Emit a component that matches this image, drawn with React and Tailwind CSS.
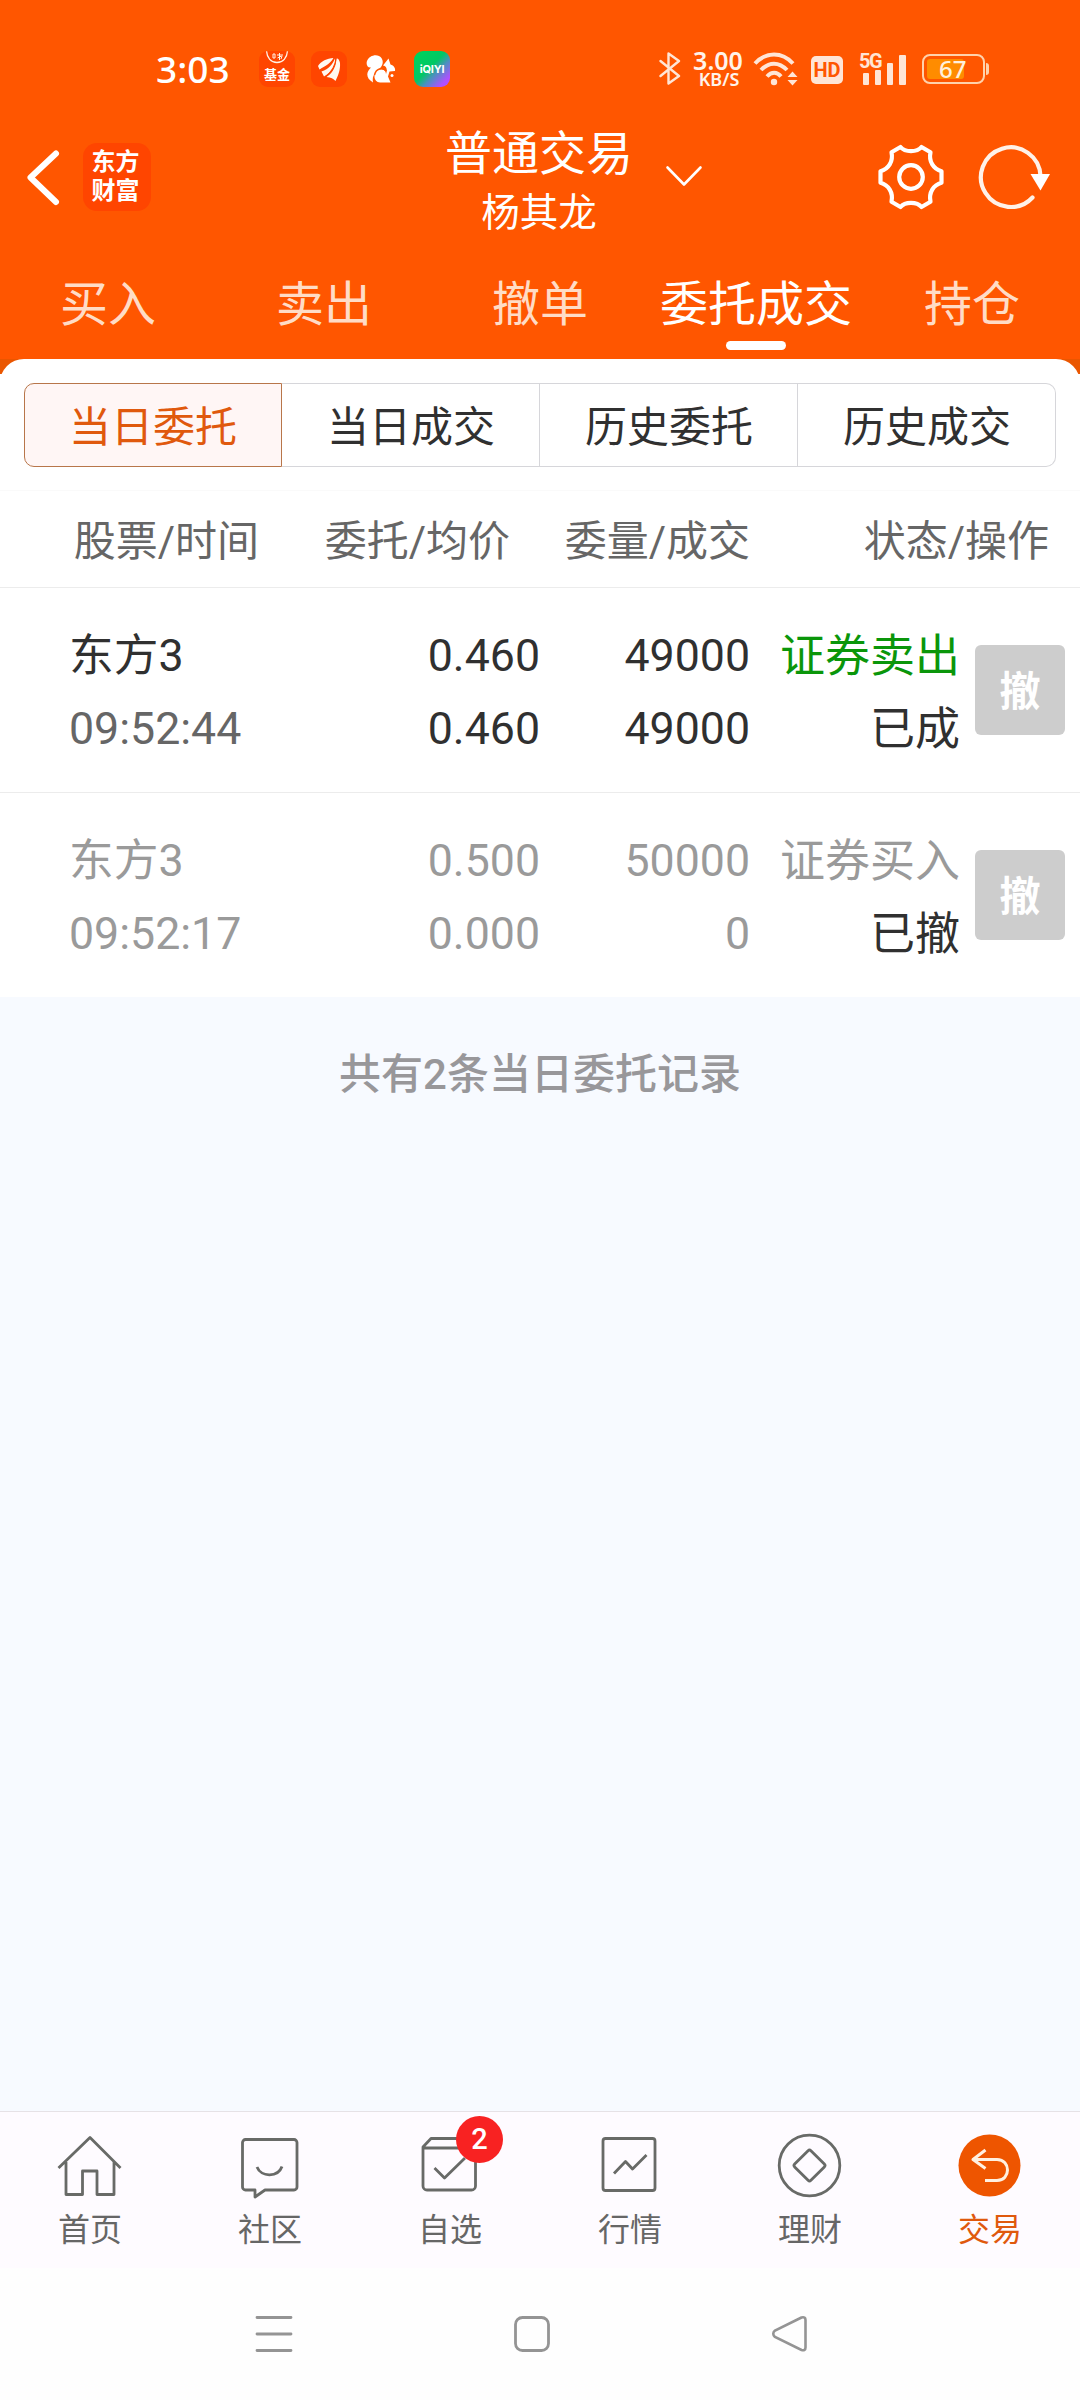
import React from "react";

const FONT = "font-[Roboto,'Noto_Sans_CJK_SC',sans-serif]";

function StatusBar() {
  return (
    <div className="flex h-[110px] items-start text-white">
      <span className="ml-[156px] mt-[45px] w-[103px] font-['Noto_Sans','Noto_Sans_CJK_SC',sans-serif] text-[37px] font-medium leading-[48px]">3:03</span>
      <div className="mt-[51px] flex h-9 w-9 flex-col items-center overflow-hidden rounded-[9px] bg-[#ff4500]">
        <svg width="24" height="13" viewBox="0 0 24 13" fill="none" stroke="#fff3e6" strokeWidth="1.3">
          <path d="M1.5 0C2 7 6 11.5 12 11.5S22 7 22.500 0" />
          <path d="M8 3v4h2V3zM12 4h6M14.500 2v7M12.500 7l4-2M17 5l-1 3" strokeWidth="1" />
        </svg>
        <span className="text-[13px] font-bold leading-[21px]">基金</span>
      </div>
      <div className="ml-4 mt-[51px] flex h-9 w-9 items-center justify-center rounded-[9px] bg-[#ff4500]">
        <svg width="36" height="36" viewBox="0 0 36 36" fill="#fff8f0">
          <path d="M7 15C10 10 16 7.500 22.500 7 20 12 15 14.500 8.500 18.500Z" />
          <path d="M10.500 20.500C18 18 22 13 24 7 25.500 13 21 21 13 25.500Z" />
          <path d="M15.500 26C23 21 25 14 25.500 7.500 27 7 28.500 9 29 12 29.500 19 27 25 24.500 30 22.500 27.500 20 26.500 15.500 26Z" />
          <path d="M9 19.500C17 16.500 21 12 23.500 7M14 26C21 21 24.500 14 25 7" fill="none" stroke="#ff4500" strokeWidth="1.100" />
        </svg>
      </div>
      <svg className="ml-[19px] mt-[54px]" width="30" height="30" viewBox="0 0 30 30">
        <path d="M7 28.500C-.5 24 0 18 5 13.500 1 14 0 10 1 7 3 2 9 0 13 2 17 4 18 9 15 13 11 18 5.500 20 7 28.500Z" fill="#fff" />
        <path d="M17 11.500 22.500 4.500 24.500 10.500C28 11.500 29.500 14.500 29 17L23.500 17.500 22 22.500 24.500 28.500H14C7 28 7 19 12 16 16 14 20 16 20 20 22 15 20 12 17 11.500Z" fill="#fff" />
        <circle cx="26" cy="21.500" r="1.500" fill="#fff" />
        <path d="M8.500 21C10 14.500 16 13 20.500 17" fill="none" stroke="#ff5600" strokeWidth="1.500" />
      </svg>
      <div className="ml-[18px] mt-[51px] flex h-9 w-9 items-center justify-center rounded-[9px] bg-[linear-gradient(135deg,#00d35b_0%,#00c864_45%,#4d8fc0_62%,#b050ff_85%)] font-[Inter,sans-serif] text-[11px] font-bold leading-none tracking-[-0.2px]">
        iQIYI
      </div>

      <svg className="ml-[209px] mt-[51px]" width="22" height="35" viewBox="0 0 22 35" fill="none" stroke="#ffe5d6" strokeWidth="2.400" strokeLinejoin="round" strokeLinecap="round">
        <path d="M1.500 10 20 25 9.500 32.500V2.500L20 10 1.500 25" />
      </svg>
      <div className="ml-[10px] mt-[49px] flex w-[54px] flex-col items-center font-['Noto_Sans',sans-serif] text-[#fff3ea]">
        <span className="text-[25px] font-semibold leading-[22px]">3.00</span>
        <span className="ml-0.5 text-[18px] font-semibold leading-[17px]">KB/S</span>
      </div>
      <svg className="ml-[8px] mt-[51px]" width="46" height="36" viewBox="0 0 46 36" fill="none" stroke="#ffe5d6" strokeWidth="4">
        <path d="M2 12.500C13 .5 29 .5 40 12.500" />
        <path d="M8 19C16 10.500 26 10.500 34 19" />
        <path d="M14 25.500C18.500 20.500 24 20.500 28 25.500" />
        <circle cx="21" cy="31" r="3.200" fill="#ffe5d6" stroke="none" />
        <path d="M34.500 26 39.500 20.500 44.500 26ZM34.500 29H44.500L39.500 34.500Z" fill="#ffe5d6" stroke="none" />
      </svg>
      <div className="ml-[12px] mt-[56px] flex h-7 w-8 items-center justify-center rounded-[5px] bg-[#ffe5d6] font-[Roboto,sans-serif] text-[20px] font-bold leading-none text-[#ff5600]">
        HD
      </div>
      <div className="ml-[16px] mt-[51px] flex h-[34px] w-[48px] items-end text-[#ffe5d6]">
        <div className="flex w-[27px] flex-col">
          <span className="h-[18px] font-[Roboto,sans-serif] text-[20px] font-bold leading-[18px] tracking-[-1.500px]">5G</span>
          <div className="ml-[4px] flex items-end gap-[6px]">
            <i className="h-3 w-1.5 rounded-[1px] bg-[#ffe5d6]" />
            <i className="h-[15px] w-1.5 rounded-[1px] bg-[#ffe5d6]" />
          </div>
        </div>
        <i className="ml-[1px] h-[22px] w-1.5 rounded-[1px] bg-[#ffe5d6]" />
        <i className="ml-[6px] h-[30px] w-[7px] rounded-[1px] bg-[#ffe5d6]" />
      </div>
      <div className="ml-[15px] mt-[54px] flex h-[30px] w-[63px] rounded-[8px] border-2 border-[#ffd2ab] p-[3px]">
        <div className="flex h-full w-[37px] items-center whitespace-nowrap rounded-[3px] bg-[#ff8c00] pl-[12px] font-['Noto_Sans',sans-serif] text-[24px] font-medium leading-none text-[#fff0dc]">67</div>
      </div>
      <i className="ml-[1px] mt-[63px] h-3 w-[3px] rounded-r-sm bg-[#ffd2ab]" />
    </div>
  );
}

function TitleBar() {
  return (
    <div className="grid h-[137px] grid-cols-[446px_188px_1fr] items-start text-white">
      <div className="flex pt-[33px]">
        <svg className="ml-[25px] mt-[5px]" width="36" height="60" viewBox="25 148 36 60" fill="none" stroke="#fff" strokeWidth="6" strokeLinecap="round" strokeLinejoin="round">
          <path d="M56 153.500 30.500 177.500 56 202" />
        </svg>
        <div className="ml-[22px] flex h-[68px] w-[68px] flex-col items-center justify-center rounded-[14px] bg-[#ff4500] pr-[3px] text-[24px] font-bold leading-[29px]">
          <span>东方</span>
          <span>财富</span>
        </div>
      </div>
      <div className="flex flex-col items-center whitespace-nowrap pr-[2px] pt-[16px]">
        <span className="text-[47px] leading-[56px]">普通交易</span>
        <span className="mt-[6px] text-[38.500px] leading-[50px]">杨其龙</span>
      </div>
      <div className="flex">
        <svg className="ml-[30px] mt-[54px]" width="40" height="24" viewBox="664 164 40 24" fill="none" stroke="#fff" strokeWidth="2.600" strokeLinecap="round" strokeLinejoin="round">
          <path d="M667.500 167.500 684 184.500 700.500 167.500" />
        </svg>
        <svg className="ml-[171px] mt-[31px]" width="72" height="72" viewBox="-36 -36 72 72" fill="none" stroke="#fff" strokeWidth="4.200" strokeLinejoin="round">
          <circle r="11.800" />
          <path d="M-10.500 -30C-6 -24.500 6 -24.500 10.500 -30L19.500 -24.800C17.500 -15.500 22.500 -8 30.500 -5.800V5.800C22.500 8 17.500 15.500 19.500 24.800L10.500 30C6 24.500 -6 24.500 -10.500 30L-19.500 24.800C-17.500 15.500 -22.500 8 -30.500 5.800V-5.800C-22.500 -8 -17.500 -15.500 -19.500 -24.800Z" />
        </svg>
        <svg className="ml-[28px] mt-[31px]" width="76" height="72" viewBox="975 141 76 72" fill="none" stroke="#fff2e8" strokeWidth="4.200" strokeLinecap="round">
          <path d="M1032.500 197.500A29.800 29.800 0 1 1 1040.500 176" />
          <path d="M1030.500 174H1050L1040.500 190.500Z" fill="#fff" stroke="none" />
        </svg>
      </div>
    </div>
  );
}

function MainTabs() {
  const tabs = ["买入", "卖出", "撤单", "委托成交", "持仓"];
  return (
    <nav className="grid h-[112px] grid-cols-5 text-center text-[48px] leading-[60px] text-[#ffdcc6]">
      {tabs.map((t) =>
        t === "委托成交" ? (
          <div key={t} className="flex flex-col items-center whitespace-nowrap pt-[28px] text-white">
            <span>{t}</span>
            <i className="mt-[6px] h-[9px] w-[60px] rounded-full bg-white" />
          </div>
        ) : (
          <div key={t} className="pt-[28px]">{t}</div>
        )
      )}
    </nav>
  );
}

function Segments() {
  const base = "flex items-center justify-center border-y border-r border-[#d6d6da] pl-px pt-[5px]";
  return (
    <div className="mx-6 grid h-[84px] grid-cols-4 text-[42px] leading-none text-[#303030]">
      <div className="flex items-center justify-center rounded-l-[10px] border border-[#b8764a] bg-[#fff6f5] pt-[5px] text-[#e0590d]">当日委托</div>
      <div className={base}>当日成交</div>
      <div className={base}>历史委托</div>
      <div className={base + " rounded-r-[10px]"}>历史成交</div>
    </div>
  );
}

function OrderRow({ o }) {
  const main = o.muted ? "text-[#9a9a9a]" : "text-[#303030]";
  const time = o.muted ? "text-[#9a9a9a]" : "text-[#666666]";
  const side = o.muted ? "text-[#9a9a9a]" : "text-[#0a960a]";
  return (
    <div className={"grid h-[205px] grid-cols-[270px_270px_210px_210px_120px] border-t border-[#ececec] pt-[32px] text-[44.700px] leading-[73px] " + main}>
      <div className="flex flex-col pl-[69px]">
        <span>{o.name}</span>
        <span className={time}>{o.time}</span>
      </div>
      <div className="flex flex-col text-right">
        <span>{o.price}</span>
        <span>{o.avg}</span>
      </div>
      <div className="flex flex-col text-right">
        <span>{o.qty}</span>
        <span>{o.done}</span>
      </div>
      <div className="flex flex-col whitespace-nowrap text-right text-[45px]">
        <span className={side}>{o.side}</span>
        <span className="text-[#303030]">{o.state}</span>
      </div>
      <button className="ml-[15px] mt-[25px] flex h-[90px] w-[90px] items-center justify-center rounded-[6px] bg-[#cdcdcd] pt-[5px] text-[41px] font-bold leading-none text-white">撤</button>
    </div>
  );
}

const orders = [
  { name: "东方3", time: "09:52:44", price: "0.460", avg: "0.460", qty: "49000", done: "49000", side: "证券卖出", state: "已成" },
  { name: "东方3", time: "09:52:17", price: "0.500", avg: "0.000", qty: "50000", done: "0", side: "证券买入", state: "已撤", muted: true },
];

const navItems = [
  {
    label: "首页",
    icon: <path d="M58.500 2169 90 2138.500 120.500 2169M66 2163V2195.500H82.500V2172H97V2195.500H114V2163" transform="translate(-54 -2131)" />,
  },
  {
    label: "社区",
    icon: (
      <g transform="translate(-234 -2131)">
        <path d="M245.500 2140.500H294A3 3 0 0 1 297 2143.500V2188A3 3 0 0 1 294 2191H265L255 2198V2191H245.500A3 3 0 0 1 242.500 2188V2143.500A3 3 0 0 1 245.500 2140.500Z" />
        <path d="M257 2168C261 2178.500 278 2178.500 282 2167.500" />
      </g>
    ),
  },
  {
    label: "自选",
    badge: "2",
    icon: (
      <g transform="translate(-414 -2130)">
        <path d="M423 2148H475.500V2186A4 4 0 0 1 471.500 2190H427A4 4 0 0 1 423 2186V2147L431 2138.500H468L475.500 2147" />
        <path d="M434.500 2168 444.500 2178 465 2158" />
      </g>
    ),
  },
  {
    label: "行情",
    icon: (
      <g transform="translate(-594 -2130)">
        <rect x="603" y="2138.500" width="52" height="52" rx="2.500" />
        <path d="M614 2173.500 625.500 2161.500 632.500 2169 646.500 2155" />
      </g>
    ),
  },
  {
    label: "理财",
    icon: (
      <g>
        <circle cx="35.500" cy="35.500" r="30.300" />
        <rect x="24" y="24" width="23" height="23" rx="2" transform="rotate(45 35.500 35.500)" />
      </g>
    ),
  },
  {
    label: "交易",
    active: true,
    icon: (
      <g stroke="#fff0e0" strokeWidth="3">
        <circle cx="35.500" cy="35.500" r="31" fill="#ee5500" stroke="none" />
        <path d="M31.500 20 19 29.500 31.500 38.500M19.500 29.500H43C57 29.500 57 50.500 43 50.500H31" />
      </g>
    ),
  },
];

function BottomNav() {
  return (
    <nav className="grid h-[157px] grid-cols-6 border-t border-[#e6e2e6] bg-[#fefbff] text-[32px] leading-[40px] text-[#666666]">
      {navItems.map((n) => (
        <div key={n.label} className={"relative flex flex-col items-center pt-[18px] " + (n.active ? "text-[#e0590d]" : "")}>
          <svg width="72" height="72" viewBox="0 0 72 72" fill="none" stroke="#686a67" strokeWidth="2.800" strokeLinejoin="round">{n.icon}</svg>
          <span className="mt-[8px]">{n.label}</span>
          {n.badge && (
            <span className="absolute left-[96px] top-[4px] flex h-[47px] w-[47px] items-center justify-center rounded-full bg-[#f82222] text-[29px] font-medium leading-none text-white">{n.badge}</span>
          )}
        </div>
      ))}
    </nav>
  );
}

function SystemNav() {
  return (
    <div className="flex h-[132px] bg-[#fefefe] pt-[46px]">
      <svg className="ml-[254px]" width="40" height="40" viewBox="254 2314 40 40" stroke="#949494" strokeWidth="2.800" strokeLinecap="round">
        <path d="M257 2317.500H291M257 2334H291M257 2350.500H291" />
      </svg>
      <svg className="ml-[218px]" width="40" height="40" viewBox="512 2314 40 40" fill="none" stroke="#949494" strokeWidth="2.800">
        <rect x="515.500" y="2317.500" width="33" height="33" rx="7" />
      </svg>
      <svg className="ml-[218px]" width="40" height="40" viewBox="770 2314 40 40" fill="none" stroke="#949494" strokeWidth="2.600">
        <path d="M801.500 2317.500 775 2330.500Q771.500 2333.500 775 2337L801.500 2350Q805.500 2351 805.500 2347.500V2320Q805.500 2316.500 801.500 2317.500Z" />
      </svg>
    </div>
  );
}

export default function App() {
  return (
    <div className={"flex h-[2400px] w-[1080px] flex-col overflow-hidden bg-[#f7faff] " + FONT}>
      <header className="bg-[#ff5600]">
        <StatusBar />
        <TitleBar />
        <MainTabs />
      </header>
      <div className="bg-[linear-gradient(#ea5600_15px,#ffffff_15px)]">
        <section className="h-[638px] rounded-t-[24px] bg-white">
          <div className="h-[228px] pt-6">
            <Segments />
            <div className="mt-[23px] grid grid-cols-[259px_251px_240px_299px] whitespace-nowrap border-t border-[#fafafa] pt-[21px] text-right text-[42px] leading-[60px] text-[#666666]">
              <span>股票/时间</span>
              <span>委托/均价</span>
              <span>委量/成交</span>
              <span>状态/操作</span>
            </div>
          </div>
          {orders.map((o) => (
            <OrderRow key={o.time} o={o} />
          ))}
        </section>
      </div>
      <p className="mt-[48px] text-center text-[42px] font-medium leading-[60px] text-[#98979a]">共有2条当日委托记录</p>
      <div className="mt-auto">
        <BottomNav />
        <SystemNav />
      </div>
    </div>
  );
}
